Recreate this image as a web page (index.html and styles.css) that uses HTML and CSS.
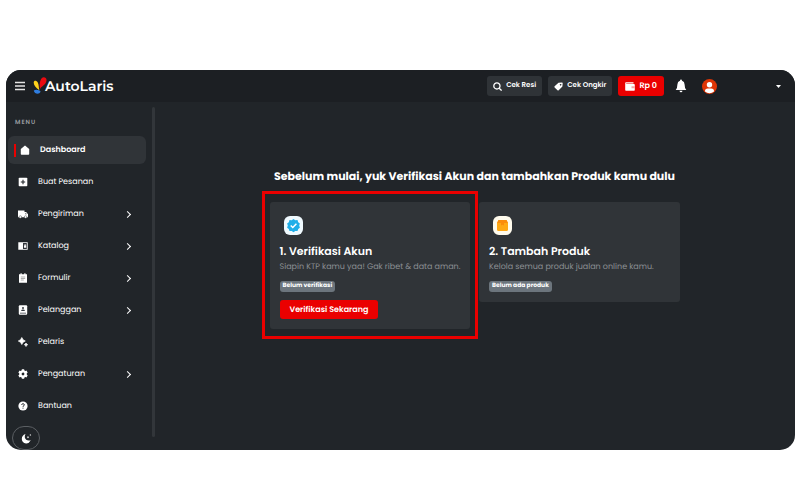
FILE: index.html
```html
<!DOCTYPE html>
<html lang="id">
<head>
<meta charset="utf-8">
<meta name="viewport" content="width=device-width, initial-scale=1">
<title>AutoLaris</title>
<link rel="stylesheet" href="styles.css">
</head>
<body>
<div class="app">
  <header class="topbar">
    <button class="plain burger" aria-label="Menu"><svg width="10" height="10" viewBox="0 0 10 10"><path d="M0 1.500h10M0 5h10M0 8.500h10" stroke="#e4e4e4" stroke-width="1.400"/></svg></button>
    <a class="brand" href="#">
      <svg width="15" height="18" viewBox="0 0 15 18"><path d="M7 12C6 6 7.500.2 10.800.2c3.400 0 3.500 4 1.200 6.800C10.200 9 8 9.800 7 12Z" fill="#ea0a10"/><path d="M6.400 13.200C2.500 11 .6 7.800.7 5.300.9 3 3.600 3.200 4.800 5.400 6 7.800 5.500 10 6.400 13.200Z" fill="#ffd21c"/><path d="M.8 13.600C3 12 6.200 12.800 7.600 14.600 6.400 18 1.500 17.400.8 13.600Z" fill="#2f7de0"/></svg>
      <span>AutoLaris</span>
    </a>
    <div class="actions">
      <button class="btn tool"><svg width="9" height="9" viewBox="0 0 9 9" fill="none" stroke="#fff" stroke-width="1.300"><circle cx="3.900" cy="3.900" r="3.100"/><path d="m6.200 6.200 2.400 2.400"/></svg>Cek Resi</button>
      <button class="btn tool"><svg width="9" height="9" viewBox="0 0 9 9"><path fill="#fff" fill-rule="evenodd" d="M4.500.8 8 .5q.7 0 .7.700L8.400 4.600 4.700 8.300q-.6.500-1.200 0L.6 5.400q-.5-.6 0-1.200ZM6.600 1.900a.8.800 0 1 0 .01 0Z"/></svg>Cek Ongkir</button>
      <button class="btn balance"><svg width="10" height="9" viewBox="0 0 10 9"><path fill="#fff" d="M1 .3h7.500v1.200H1.200v.6H9q.8 0 .8.800v5q0 .8-.8.800H1q-.8 0-.8-.8V1.100Q.2.300 1 .3Z"/><path d="M6.500 4.200H10v2H6.500z" fill="#f5a5a7"/></svg>Rp 0</button>
      <button class="plain" aria-label="Notifikasi"><svg width="12" height="14" viewBox="0 0 12 14"><path fill="#fff" d="M6 .5q1 0 1 1.200Q9.600 2.500 9.600 5.500 9.600 9 11.300 11H.7Q2.400 9 2.400 5.500 2.400 2.500 5 1.700 5 .5 6 .5ZM4.500 11.700h3Q7.300 13.200 6 13.200t-1.500-1.500Z"/></svg></button>
      <button class="plain profile" aria-label="Profil"><svg width="15" height="15" viewBox="0 0 15 15"><circle cx="7.500" cy="7.500" r="7.500" fill="#df3505"/><circle cx="7.500" cy="5.700" r="2.700" fill="#fff"/><path d="M3 12.500V12q0-2.500 2.700-2.500h3.600q2.700 0 2.700 2.500v.5a7 7 0 0 1-9 0Z" fill="#fff"/></svg><svg width="5" height="3" viewBox="0 0 5 3"><path d="M0 0h5L2.500 3Z" fill="#fff"/></svg></button>
    </div>
  </header>
  <div class="body">
    <aside class="sidebar">
      <div class="menu">
        <h2>MENU</h2>
        <nav>
          <a class="item active" href="#"><svg viewBox="0 0 10 10"><path fill="#fff" d="M5 .5 9.200 4v5q0 .7-.7.700h-7Q.8 9.700.8 9V4Z"/></svg><span>Dashboard</span></a>
          <a class="item" href="#"><svg viewBox="0 0 10 10"><rect x=".7" y=".7" width="8.600" height="8.600" rx=".8" fill="#fff"/><path d="M5 2.800v4.400M2.800 5h4.400" stroke="#212529" stroke-width="1.100"/></svg><span>Buat Pesanan</span></a>
          <a class="item sub" href="#"><svg viewBox="0 0 10 10"><path fill="#fff" d="M0 1.500h6.500v1.600h1.700L10 5.300V8.200H0Z"/><path d="M7.200 4.200h.8l.9 1.100H7.200Z" fill="#555"/><circle cx="2.300" cy="8" r="1.300" fill="#fff" stroke="#212529" stroke-width=".4"/><circle cx="7.600" cy="8" r="1.300" fill="#fff" stroke="#212529" stroke-width=".4"/></svg><span>Pengiriman</span></a>
          <a class="item sub" href="#"><svg viewBox="0 0 10 10"><path fill="#fff" d="M.3 1.200h9.400v7.600H.3Z"/><path d="M5 2h3.800v6H5Z" fill="#30343a"/><path d="M6 4.500h2.200v2.200H6ZM6.500 4.500V3.200h1.200v1.300" fill="#fff"/></svg><span>Katalog</span></a>
          <a class="item sub" href="#"><svg viewBox="0 0 10 10"><path fill="#fff" d="M1 1.200h1.500V.3h1.200v.9h2.600V.3h1.200v.9H9v8.500H1Z"/><path d="M2.800 4h4.400M2.800 5.500h4.400M2.800 7h3" stroke="#777" stroke-width=".6"/></svg><span>Formulir</span></a>
          <a class="item sub" href="#"><svg viewBox="0 0 10 10"><rect x=".8" y=".3" width="8.400" height="9.400" rx="1" fill="#fff"/><circle cx="5" cy="3" r="1" fill="#343940"/><path d="M3.200 6V5.600q0-1 1.800-1t1.800 1V6ZM2 7.800h6v.7H2Z" fill="#343940"/></svg><span>Pelanggan</span></a>
          <a class="item" href="#"><svg viewBox="0 0 10 10"><path fill="#fff" stroke="#fff" stroke-width=".7" stroke-linejoin="round" d="M3.800.5Q4.600 3.200 7.300 4 4.600 4.800 3.800 7.500 3 4.800.3 4 3 3.200 3.800.5ZM8 6q.4 1.400 1.700 1.700Q8.400 8 8 9.500 7.600 8 6.300 7.700 7.600 7.400 8 6Z"/></svg><span>Pelaris</span></a>
          <a class="item sub" href="#"><svg viewBox="0 0 10 10"><circle cx="5" cy="5" r="2.600" fill="none" stroke="#fff" stroke-width="2.400"/><path d="M5 .3v2M5 7.700v2M.9 2.600l1.800 1M7.300 6.400l1.800 1M.9 7.400l1.800-1M7.300 3.600l1.800-1" stroke="#fff" stroke-width="2.400"/></svg><span>Pengaturan</span></a>
          <a class="item" href="#"><svg viewBox="0 0 10 10"><circle cx="5" cy="5" r="4.600" fill="#fff"/><path d="M3.600 3.900Q3.700 2.700 5 2.700t1.400 1.200Q6.400 4.600 5 5.300v.6M5 6.700v1" fill="none" stroke="#212529" stroke-width=".9"/></svg><span>Bantuan</span></a>
        </nav>
        <button class="plain theme" aria-label="Mode gelap"><svg width="11" height="11" viewBox="0 0 11 11"><path fill="#fff" d="M4.500 1Q2.700 4.600 5.200 6.800 7.200 8.200 9.800 7.200 8 10.600 5 10.400 1 9.800.8 6 .8 2.400 4.500 1Z"/><path d="m7 2.800.4 1 .9.400-.9.400-.4 1-.4-1-.9-.4.900-.4ZM9.300.8l.3.900.9.300-.9.300-.3.900-.3-.9-.9-.3.900-.3Z" fill="#fff"/></svg></button>
      </div>
      <div class="track"></div>
    </aside>
    <main>
      <h1>Sebelum mulai, yuk Verifikasi Akun dan tambahkan Produk kamu dulu</h1>
      <div class="cards">
        <section class="card current">
          <svg width="19" height="19" viewBox="0 0 19 19"><rect width="19" height="19" rx="6" fill="#f0faff"/><path fill="#20aee8" d="m9.500 3 1.800 1.200 2.200-.1.700 2.100 1.700 1.300-.7 2.100.7 2.100-1.700 1.300-.7 2.100-2.200-.1-1.800 1.200-1.800-1.200-2.200.1-.7-2.100-1.700-1.300.7-2.100-.7-2.100 1.700-1.300.7-2.100 2.200.1Z"/><path d="m6.700 9.500 2.100 2 3.600-3.700" fill="none" stroke="#fff" stroke-width="1.500"/></svg>
          <h3>1. Verifikasi Akun</h3>
          <p>Siapin KTP kamu yaa! Gak ribet &amp; data aman.</p>
          <span class="badge">Belum verifikasi</span>
          <button class="btn verify">Verifikasi Sekarang</button>
        </section>
        <section class="card">
          <svg width="19" height="19" viewBox="0 0 19 19"><rect width="19" height="19" rx="6" fill="#fffbed"/><path fill="#ffa914" d="M5.500 4h8L15 7v6.500q0 1.500-1.500 1.500h-8Q4 15 4 13.500V7Z"/><path fill="#fb8c0c" d="M5.500 4h8L15 7H4ZM8 7h3v2.500L9.500 8.800 8 9.500Z"/></svg>
          <h3>2. Tambah Produk</h3>
          <p>Kelola semua produk jualan online kamu.</p>
          <span class="badge">Belum ada produk</span>
        </section>
      </div>
    </main>
  </div>
</div>
</body>
</html>
```
FILE: styles.css
```css
* { box-sizing: border-box; }
body {
  margin: 0;
  min-height: 100vh;
  padding: 70px 5px 50px 6px;
  display: flex;
  background: #fff;
  color: #fff;
  font-family: Poppins, Inter, sans-serif;
  font-size: 8px;
  text-rendering: geometricPrecision;
}
h1, h2, h3, p { margin: 0; }
a { color: inherit; text-decoration: none; }
button { border: 0; padding: 0; color: inherit; font: inherit; text-rendering: inherit; cursor: pointer; }
svg { display: block; flex: none; }
.app {
  flex: 1;
  display: flex;
  flex-direction: column;
  overflow: hidden;
  border-radius: 15px;
  background: #212529;
}
.topbar {
  display: flex;
  align-items: center;
  height: 32px;
  padding: 0 14px 0 9px;
  background: #1c1f23;
}
.plain { display: flex; background: none; }
.brand {
  display: flex;
  align-items: center;
  margin-left: 8px;
  font: 600 14px/18px Montserrat, Inter, sans-serif;
}
.brand span { margin-left: -3px; }
.actions {
  display: flex;
  align-items: center;
  gap: 6px;
  margin-left: auto;
}
.btn {
  display: flex;
  align-items: center;
  justify-content: center;
  border-radius: 3px;
  font-weight: 600;
  white-space: nowrap;
}
.tool {
  gap: 4px;
  height: 20px;
  padding: 0 6px;
  background: #2f3337;
  font-size: 7px;
}
.balance {
  gap: 4px;
  height: 20px;
  padding: 0 7px;
  background: #ea0000;
}
.actions .plain { margin-left: 5px; }
.actions .profile { align-items: center; gap: 59px; margin-left: 9px; }
.body { display: flex; flex: 1; }
.sidebar {
  display: flex;
  flex: 0 0 149px;
}
.menu { flex: 1; padding: 16px 6px 0 2px; }
.menu h2 {
  padding-left: 7px;
  color: #999da1;
  font-size: 6px;
  font-weight: 600;
  line-height: 10px;
  letter-spacing: 1px;
}
nav {
  display: flex;
  flex-direction: column;
  gap: 4px;
  margin-top: 8px;
}
.item {
  display: flex;
  align-items: center;
  gap: 10px;
  height: 28px;
  padding: 0 16px 0 10px;
  border-radius: 6px;
}
.item svg { width: 10px; height: 10px; }
.active { padding-left: 6px; background: #303438; font-weight: 600; }
.active::before { content: ""; width: 2px; height: 13px; margin-right: -6px; background: #ea0000; }
.sub::after {
  content: "";
  width: 4px;
  height: 4px;
  margin-left: auto;
  border: solid #fff;
  border-width: 1px 1px 0 0;
  transform: rotate(45deg);
}
.theme {
  align-items: center;
  justify-content: center;
  width: 28px;
  height: 24px;
  margin: 6px 0 0 4px;
  border: 1px solid #5b5f63;
  border-radius: 12px;
}
.track { width: 3px; margin: 5px 0 13px; border-radius: 2px; background: #32363a; }
main {
  flex: 1;
  display: flex;
  flex-direction: column;
  align-items: center;
  padding: 65px 1px 0 0;
}
h1 { font-size: 11px; font-weight: 700; line-height: 18px; }
.cards {
  display: grid;
  grid-template-columns: 1fr 1fr;
  align-items: start;
  gap: 9px;
  width: 100%;
  max-width: 410px;
  margin-top: 17px;
}
.card {
  display: flex;
  flex-direction: column;
  align-items: flex-start;
  min-width: 0;
  padding: 14px 8px 10px 10px;
  border-radius: 3px;
  background: #303438;
}
.card > svg { margin-left: 4px; }
.card h3 { margin-top: 8px; font-size: 11px; font-weight: 600; line-height: 16px; }
.card p { color: #8b8f93; line-height: 14px; margin-top: 1px; }
.badge {
  margin-top: 7px;
  padding: 0 3px;
  border-radius: 3px;
  background: #6c757d;
  font-size: 6px;
  font-weight: 700;
  line-height: 11px;
}
.verify { height: 19px; margin-top: 8px; padding: 0 10px; background: #ea0000; }
.current { position: relative; z-index: 1; }
.current::after {
  content: "";
  position: absolute;
  inset: -11px -8px -10px;
  border: 3px solid #ea0000;
  pointer-events: none;
}
```
